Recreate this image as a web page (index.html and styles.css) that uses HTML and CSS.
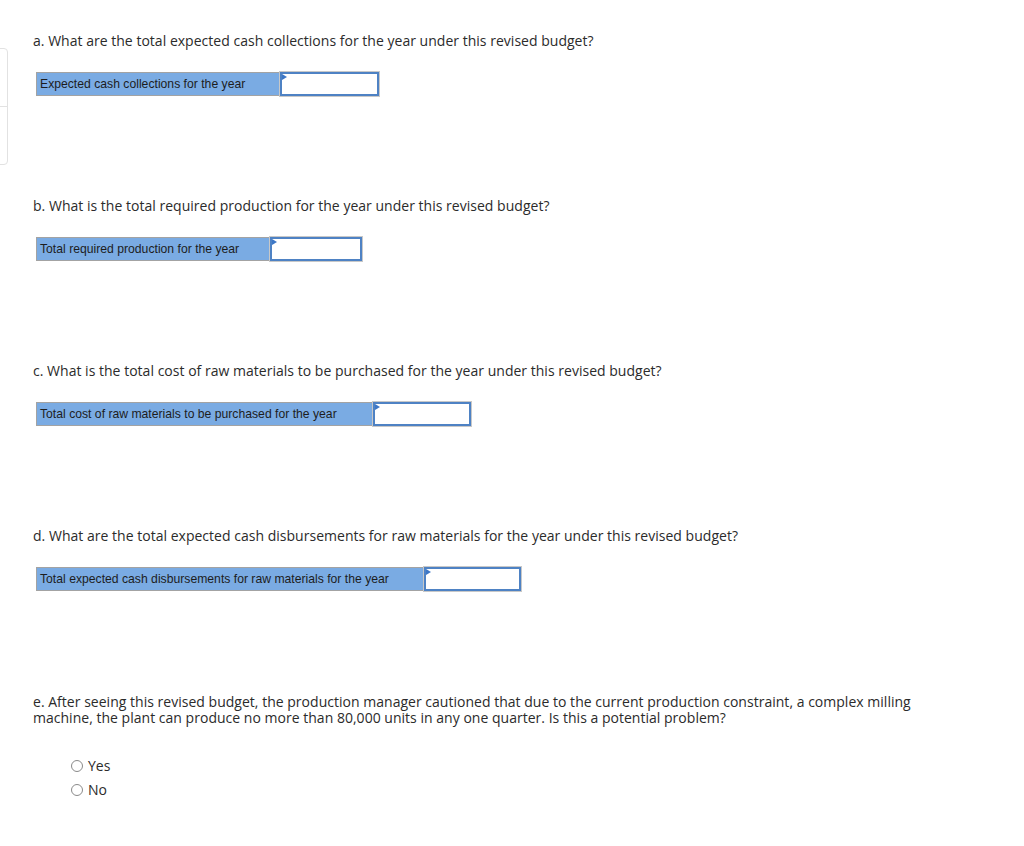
FILE: index.html
```html
<!DOCTYPE html>
<html>
<head>
<meta charset="utf-8">
<link rel="stylesheet" href="styles.css">
</head>
<body>
<div class="side-box">
  <div class="side-cell"></div>
  <div class="side-cell"></div>
</div>
<main class="page">
  <section class="q q-a">
    <p class="q-text">a. What are the total expected cash collections for the year under this revised budget?</p>
    <div class="field">
      <div class="field-label lbl-a">Expected cash collections for the year</div>
      <div class="field-input inp-a"><span class="marker"></span></div>
    </div>
  </section>
  <section class="q">
    <p class="q-text">b. What is the total required production for the year under this revised budget?</p>
    <div class="field">
      <div class="field-label lbl-b">Total required production for the year</div>
      <div class="field-input inp-b"><span class="marker"></span></div>
    </div>
  </section>
  <section class="q">
    <p class="q-text">c. What is the total cost of raw materials to be purchased for the year under this revised budget?</p>
    <div class="field">
      <div class="field-label lbl-c">Total cost of raw materials to be purchased for the year</div>
      <div class="field-input inp-c"><span class="marker"></span></div>
    </div>
  </section>
  <section class="q">
    <p class="q-text">d. What are the total expected cash disbursements for raw materials for the year under this revised budget?</p>
    <div class="field">
      <div class="field-label lbl-d">Total expected cash disbursements for raw materials for the year</div>
      <div class="field-input inp-d"><span class="marker"></span></div>
    </div>
  </section>
  <section class="q q-e">
    <p class="q-text">e. After seeing this revised budget, the production manager cautioned that due to the current production constraint, a complex milling machine, the plant can produce no more than 80,000 units in any one quarter. Is this a potential problem?</p>
    <div class="options">
      <label class="opt"><span class="radio"></span>Yes</label>
      <label class="opt"><span class="radio"></span>No</label>
    </div>
  </section>
</main>
</body>
</html>
```
FILE: styles.css
```css
html, body {
  margin: 0;
  padding: 0;
  background: #fff;
}
body {
  position: relative;
  font-family: "Open Sans", "Liberation Sans", sans-serif;
  color: #2b2b2b;
}
.side-box {
  position: absolute;
  left: -20px;
  top: 48px;
  width: 26px;
  height: 115px;
  border: 1px solid #e2e2e2;
  border-radius: 4px;
  display: flex;
  flex-direction: column;
}
.side-cell {
  flex: 1;
}
.side-cell + .side-cell {
  border-top: 1px solid #e2e2e2;
}
.page {
  padding: 32px 0 0 33px;
  max-width: 885px;
}
.q {
  margin: 0;
}
.q-text {
  margin: 0;
  font-size: 14px;
  line-height: 18px;
  letter-spacing: 0.02px;
}
.field {
  display: flex;
  margin: 22px 0 0 3px;
  height: 24px;
  width: max-content;
  border: 1px solid #a3a3a3;
  border-right: none;
  box-sizing: border-box;
}
.field-label {
  background: #7aabe3;
  font-family: "Liberation Sans", Arial, sans-serif;
  font-size: 12.2px;
  color: #1d1d1d;
  line-height: 22px;
  padding-left: 3px;
  box-sizing: border-box;
}
.lbl-a { width: 243px; }
.lbl-b { width: 233px; }
.lbl-c { width: 336px; }
.lbl-d { width: 387px; }
.field-input {
  position: relative;
  background: #fff;
  border: 2px solid #4e82c4;
  box-sizing: border-box;
  height: 24px;
  margin-top: -1px;
  outline: 1px solid #c8c8c8;
}
.inp-a { width: 99px; }
.inp-b { width: 92px; }
.inp-c { width: 98px; }
.inp-d { width: 97px; }
.marker {
  position: absolute;
  left: 0;
  top: 0;
  width: 0;
  height: 0;
  border-top: 3px solid transparent;
  border-bottom: 3px solid transparent;
  border-left: 5px solid #3d77c6;
}
.q + .q {
  margin-top: 101px;
}
.q + .q-e {
  margin-top: 103px;
}
.q-e .q-text {
  line-height: 16px;
}
.options {
  margin: 31px 0 0 38px;
  display: flex;
  flex-direction: column;
  gap: 6px;
}
.opt {
  display: flex;
  align-items: center;
  font-size: 14px;
  line-height: 18px;
}
.radio {
  width: 12px;
  height: 12px;
  border: 1px solid #8a8a8a;
  border-radius: 50%;
  margin-right: 5px;
  box-sizing: border-box;
}
```
